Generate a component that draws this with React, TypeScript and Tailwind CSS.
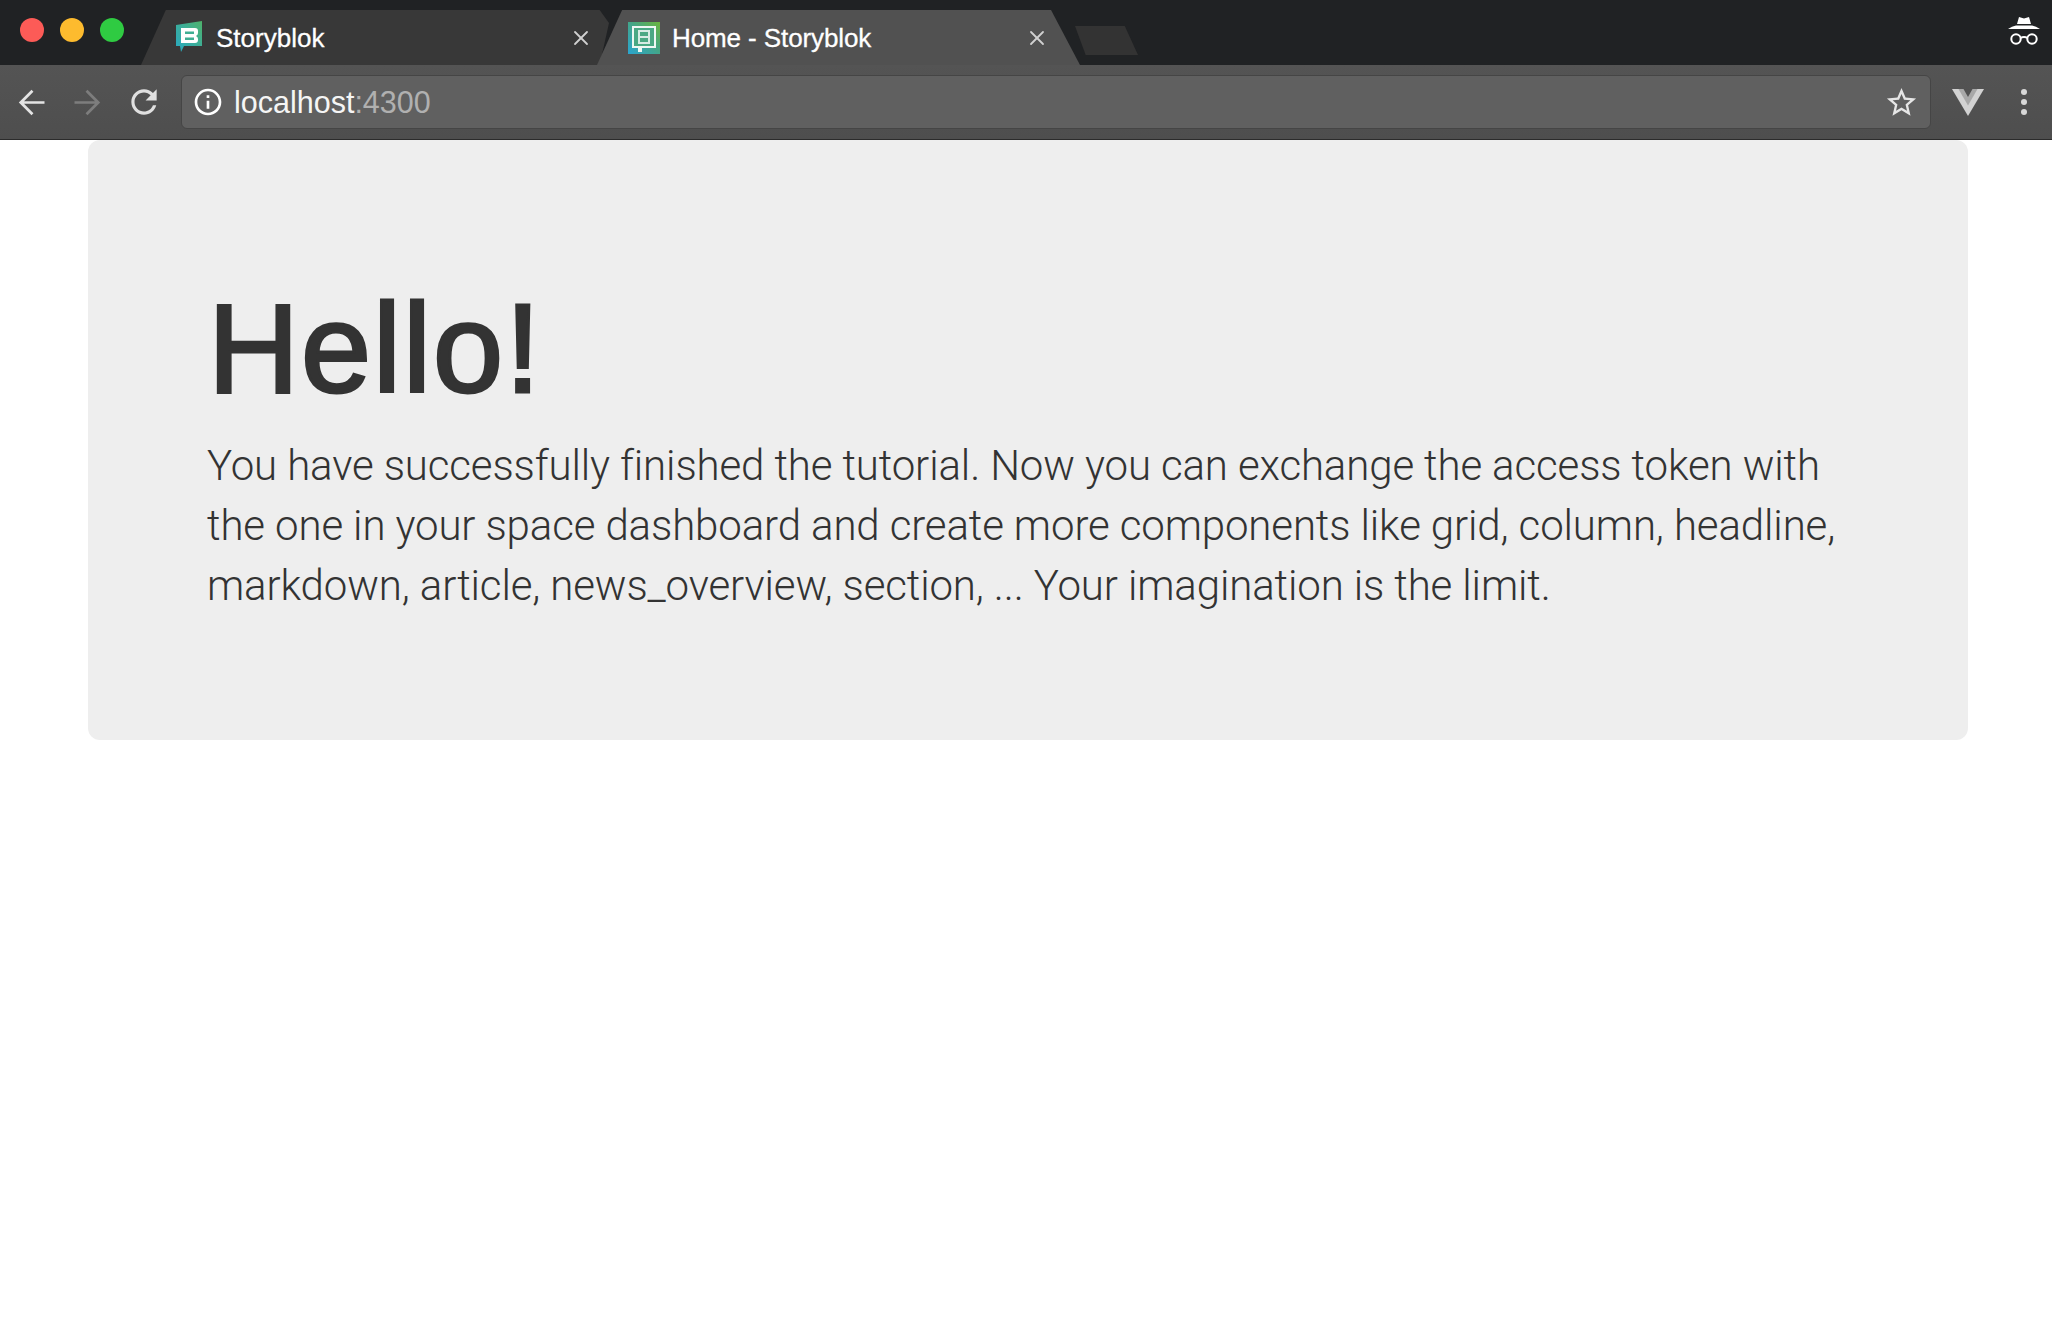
import { X } from 'lucide-react';

const SANS = 'font-["Liberation_Sans",Arial,sans-serif]';

function LogoSharp() {
  return (
    <svg width="28" height="32" viewBox="0 0 28 32" className="shrink-0" aria-hidden>
      <defs>
        <linearGradient id="sb-a" x1="0" y1="1" x2="1" y2="0">
          <stop offset="0" stopColor="#27a9c4" />
          <stop offset="0.6" stopColor="#3fae93" />
          <stop offset="1" stopColor="#4fb36a" />
        </linearGradient>
      </defs>
      <path d="M1 4 L27 0 V25 H9 L6 31 L5 25 H1 Z" fill="url(#sb-a)" />
      <path
        d="M6 7 H20 Q23 7 23 10 V12 Q23 14 21 15 Q23 16 23 18 V19 Q23 22 20 22 H6 Z"
        fill="#ffffff"
      />
      <rect x="10" y="10.500" width="9" height="2.500" fill="#3fae93" />
      <rect x="10" y="16.500" width="9" height="2.500" fill="#3fae93" />
    </svg>
  );
}

// the active tab's favicon is a blown up 16px bitmap, hence crispEdges
function LogoPixel() {
  return (
    <svg width="32" height="32" viewBox="0 0 16 16" shapeRendering="crispEdges" className="shrink-0" aria-hidden>
      <defs>
        <linearGradient id="sb-b" x1="0" y1="1" x2="1" y2="0">
          <stop offset="0" stopColor="#2aa5d0" />
          <stop offset="0.55" stopColor="#45a684" />
          <stop offset="1" stopColor="#6bb53d" />
        </linearGradient>
      </defs>
      <rect width="16" height="16" fill="url(#sb-b)" />
      <path d="M2 2 H14 V13 H7 V15 H5 V13 H2 Z" fill="#eef7f3" />
      <rect x="3" y="3" width="10" height="9" fill="#4aa884" />
      <rect x="5" y="4" width="6" height="7" fill="#d6ebe4" />
      <rect x="6" y="5" width="4" height="2" fill="#4aa884" />
      <rect x="6" y="8" width="4" height="2" fill="#4aa884" />
    </svg>
  );
}

function TabShape({ active }: { active?: boolean }) {
  return (
    <svg viewBox="0 0 100 55" preserveAspectRatio="none" className="absolute inset-0 h-full w-full" aria-hidden>
      <path
        d={active ? 'M0 55 L5.200 0 H94 L100 55 Z' : 'M0 55 L5.300 0 H98 L100 13 L98 55 Z'}
        fill={active ? '#515151' : '#383838'}
      />
    </svg>
  );
}

function MaterialIcon({ d, size, className }: { d: string; size: number; className: string }) {
  return (
    <svg width={size} height={size} viewBox="0 0 24 24" fill="currentColor" className={`shrink-0 ${className}`} aria-hidden>
      <path d={d} />
    </svg>
  );
}

const ICONS = {
  back: 'M20 11.200H7.400l5.800-5.800L12 4.200l-7.800 7.800 7.800 7.800 1.200-1.200-5.800-5.800H20v-1.600z',
  forward: 'M4 11.200h12.600l-5.800-5.800L12 4.200l7.800 7.800-7.800 7.800-1.200-1.200 5.800-5.800H4v-1.600z',
  reload:
    'M17.650 6.350C16.200 4.900 14.210 4 12 4c-4.420 0-7.990 3.580-7.990 8s3.570 8 7.990 8c3.730 0 6.840-2.550 7.730-6h-2.080c-.82 2.330-3.040 4-5.650 4-3.310 0-6-2.690-6-6s2.690-6 6-6c1.660 0 3.140.69 4.220 1.780L13 11h7V4l-2.350 2.350z',
  info: 'M11 7h2v2h-2zm0 4h2v6h-2zm1-9C6.480 2 2 6.480 2 12s4.480 10 10 10 10-4.480 10-10S17.520 2 12 2zm0 18c-4.410 0-8-3.590-8-8s3.590-8 8-8 8 3.590 8 8-3.590 8-8 8z',
  star: 'M22 9.240l-7.190-.62L12 2 9.190 8.630 2 9.240l5.460 4.730L5.820 21 12 17.270 18.180 21l-1.630-7.030L22 9.240zM12 15.400l-3.760 2.270 1-4.280-3.320-2.880 4.380-.38L12 6.100l1.710 4.040 4.380.38-3.320 2.880 1 4.280L12 15.400z',
};

function Incognito() {
  return (
    <svg width="32" height="32" viewBox="0 0 32 32" aria-hidden>
      <path d="M9 9 L11 2 L16 3.500 L21 2 L23 9 Z" fill="#ffffff" />
      <path d="M0 14 Q4 11 8 10.500 H24 Q28 11 32 14 Z" fill="#ffffff" />
      <circle cx="8" cy="24" r="4.700" fill="none" stroke="#ffffff" strokeWidth="2" />
      <circle cx="24" cy="24" r="4.700" fill="none" stroke="#ffffff" strokeWidth="2" />
      <path d="M12.500 23 Q16 21 19.500 23" fill="none" stroke="#ffffff" strokeWidth="2" />
    </svg>
  );
}

function VueMark() {
  return (
    <svg width="32" height="27" viewBox="0 0 32 27" aria-hidden>
      <path d="M0 0 H32 L16 27 Z" fill="#d2d2d2" />
      <path d="M6.500 0 H25.500 L16 16.500 Z" fill="#a8a8a8" />
      <path d="M11.500 0 H20.500 L16 8 Z" fill="#515151" />
    </svg>
  );
}

export default function App() {
  return (
    <div className={`min-h-[1344px] bg-white ${SANS}`}>
      <div className="flex h-[65px] bg-[#202224]">
        <div className="flex h-[60px] items-center gap-4 pl-5">
          <span className="h-6 w-6 rounded-full bg-[#fc5b57]" />
          <span className="h-6 w-6 rounded-full bg-[#fdbb2e]" />
          <span className="h-6 w-6 rounded-full bg-[#2fcb42]" />
        </div>
        <div className="ml-[17px] flex items-end">
          <div className="relative z-0 h-[55px] w-[468px] shrink-0">
            <TabShape />
            <div className="relative flex h-full items-center">
              <span className="mr-[13px] ml-[34px] mt-[-1px] flex">
                <LogoSharp />
              </span>
              <span className="text-[26px] leading-none text-white [-webkit-text-stroke:0.3px_#ffffff]">Storyblok</span>
              <X size={24} strokeWidth={1.8} className="ml-auto mr-[16px] text-[#d0d0d0]" />
            </div>
          </div>
          <div className="relative z-10 ml-[-12px] h-[55px] w-[483px] shrink-0">
            <TabShape active />
            <div className="relative flex h-full items-center">
              <span className="mr-[12px] ml-[31px] flex">
                <LogoPixel />
              </span>
              <span className="text-[26px] leading-none tracking-[-0.1px] text-white [-webkit-text-stroke:0.3px_#ffffff]">
                Home - Storyblok
              </span>
              <X size={24} strokeWidth={1.8} className="ml-auto mr-[31px] text-[#d0d0d0]" />
            </div>
          </div>
          <div className="mb-[10px] ml-[-5px] h-[29px] w-[63px] bg-[#333333] [clip-path:polygon(0_0,79%_0,100%_100%,17%_100%)]" />
        </div>
        <div className="ml-auto flex items-center pr-[12px] pb-[3px]">
          <Incognito />
        </div>
      </div>

      <div className="flex h-[75px] items-center border-b border-[#2b2b2b] bg-gradient-to-b from-[#545454] to-[#4e4e4e]">
        <div className="flex w-[181px] items-center pl-[12px]">
          <MaterialIcon d={ICONS.back} size={39} className="text-[#e4e4e4]" />
          <MaterialIcon d={ICONS.forward} size={39} className="ml-[17px] text-[#7d7d7d]" />
          <MaterialIcon d={ICONS.reload} size={38} className="ml-[18px] text-[#e0e0e0]" />
        </div>
        <div className="flex h-[54px] w-[1750px] items-center rounded-[6px] border border-[#454545] bg-[#606060]">
          <MaterialIcon d={ICONS.info} size={32} className="ml-[10px] text-white" />
          <span className="ml-[10px] text-[30.500px] leading-none text-[#f5f5f5]">
            localhost<span className="text-[#b0b0b0]">:4300</span>
          </span>
          <MaterialIcon d={ICONS.star} size={35} className="ml-auto mr-[11px] text-[#e6e6e6]" />
        </div>
        <div className="ml-[21px]">
          <VueMark />
        </div>
        <div className="ml-[37px] flex flex-col gap-1">
          <span className="h-1.5 w-1.5 rounded-full bg-[#d8d8d8]" />
          <span className="h-1.5 w-1.5 rounded-full bg-[#d8d8d8]" />
          <span className="h-1.5 w-1.5 rounded-full bg-[#d8d8d8]" />
        </div>
      </div>

      <div className="ml-[88px] h-[600px] w-[1880px] rounded-xl bg-[#eeeeee] px-[120px] pt-[140px] text-[#333333]">
        <h1 className="text-[126px] leading-[1.1] tracking-[2px] [-webkit-text-stroke:3px_#333333]">Hello!</h1>
        <p className='mt-[17px] ml-[-1px] font-["Roboto",sans-serif] text-[42px] font-light leading-[60px] tracking-[-0.13px]'>
          You have successfully finished the tutorial. Now you can exchange the access token with the one in your space
          dashboard and create more components like grid, column, headline, markdown, article, news_overview, section,
          ... Your imagination is the limit.
        </p>
      </div>
    </div>
  );
}
